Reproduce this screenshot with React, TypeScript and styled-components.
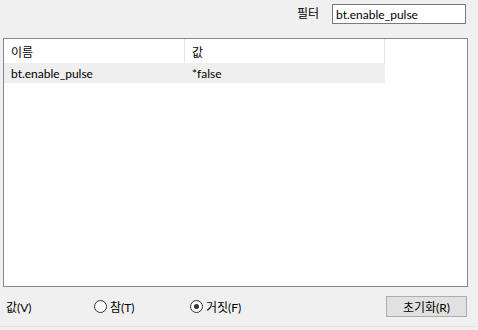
import React from "react"
import styled, { createGlobalStyle } from "styled-components"

const GlobalStyle = createGlobalStyle`
  html, body {
    margin: 0;
    padding: 0;
    background: #f0f0f0;
  }
  body {
    font-family: Lato, "Noto Sans CJK KR", sans-serif;
    font-size: 12px;
    color: #000;
  }
`

const Window = styled.div`
  width: 478px;
  height: 330px;
  display: flex;
  flex-direction: column;
  background: #f0f0f0;
  overflow: hidden;
`

const FilterBar = styled.div`
  height: 38px;
  display: flex;
  align-items: flex-start;
  justify-content: flex-end;
  padding: 4px 12px 0 0;
  box-sizing: border-box;
  gap: 13px;
`

const FilterLabel = styled.label`
  line-height: 20px;
`

const FilterInput = styled.input`
  width: 134px;
  height: 20px;
  box-sizing: border-box;
  border: 1px solid #7a7a7a;
  background: #fff;
  padding: 0 3px;
  font: inherit;
  outline: none;
`

const ListBox = styled.div`
  margin: 0 10px 0 3px;
  height: 249px;
  box-sizing: border-box;
  border: 1px solid #828790;
  background: #fff;
`

const Row = styled.div<{ $header?: boolean; $selected?: boolean }>`
  display: grid;
  grid-template-columns: 181px 200px;
  width: 381px;
  height: ${(p) => (p.$header ? "24px" : "20px")};
  background: ${(p) => (p.$selected ? "#efefef" : "#fff")};
`

const Cell = styled.div<{ $header?: boolean }>`
  display: flex;
  align-items: center;
  padding-left: 7px;
  border-right: ${(p) => (p.$header ? "1px solid #e5e5e5" : "none")};
  white-space: nowrap;
`

const Controls = styled.div`
  display: flex;
  align-items: center;
  height: 38px;
  padding: 0 11px 0 6px;
`

const ValueLabel = styled.span`
  width: 88px;
`

const Radio = styled.label`
  display: flex;
  align-items: center;
  gap: 3px;
  width: 96px;
`

const RadioDot = styled.span<{ $checked?: boolean }>`
  width: 11px;
  height: 11px;
  border: 1px solid #333;
  border-radius: 50%;
  background: #fff;
  display: flex;
  align-items: center;
  justify-content: center;

  &::after {
    content: "";
    width: 5px;
    height: 5px;
    border-radius: 50%;
    background: ${(p) => (p.$checked ? "#333" : "transparent")};
  }
`

const ResetButton = styled.button`
  margin-left: auto;
  width: 81px;
  height: 21px;
  border: 1px solid #adadad;
  background: #e1e1e1;
  font: inherit;
  padding: 0;
  color: #000;
`

const StatusLine = styled.div`
  flex: 1;
  border-top: 1px solid #e3e3e3;
  margin-top: 1px;
`

const App = () => {
  return (
    <Window>
      <GlobalStyle />
      <FilterBar>
        <FilterLabel>필터</FilterLabel>
        <FilterInput defaultValue="bt.enable_pulse" />
      </FilterBar>
      <ListBox>
        <Row $header>
          <Cell $header>이름</Cell>
          <Cell $header>값</Cell>
        </Row>
        <Row $selected>
          <Cell>bt.enable_pulse</Cell>
          <Cell>*false</Cell>
        </Row>
      </ListBox>
      <Controls>
        <ValueLabel>값(V)</ValueLabel>
        <Radio>
          <RadioDot />
          참(T)
        </Radio>
        <Radio>
          <RadioDot $checked />
          거짓(F)
        </Radio>
        <ResetButton>초기화(R)</ResetButton>
      </Controls>
      <StatusLine />
    </Window>
  )
}

export default App
